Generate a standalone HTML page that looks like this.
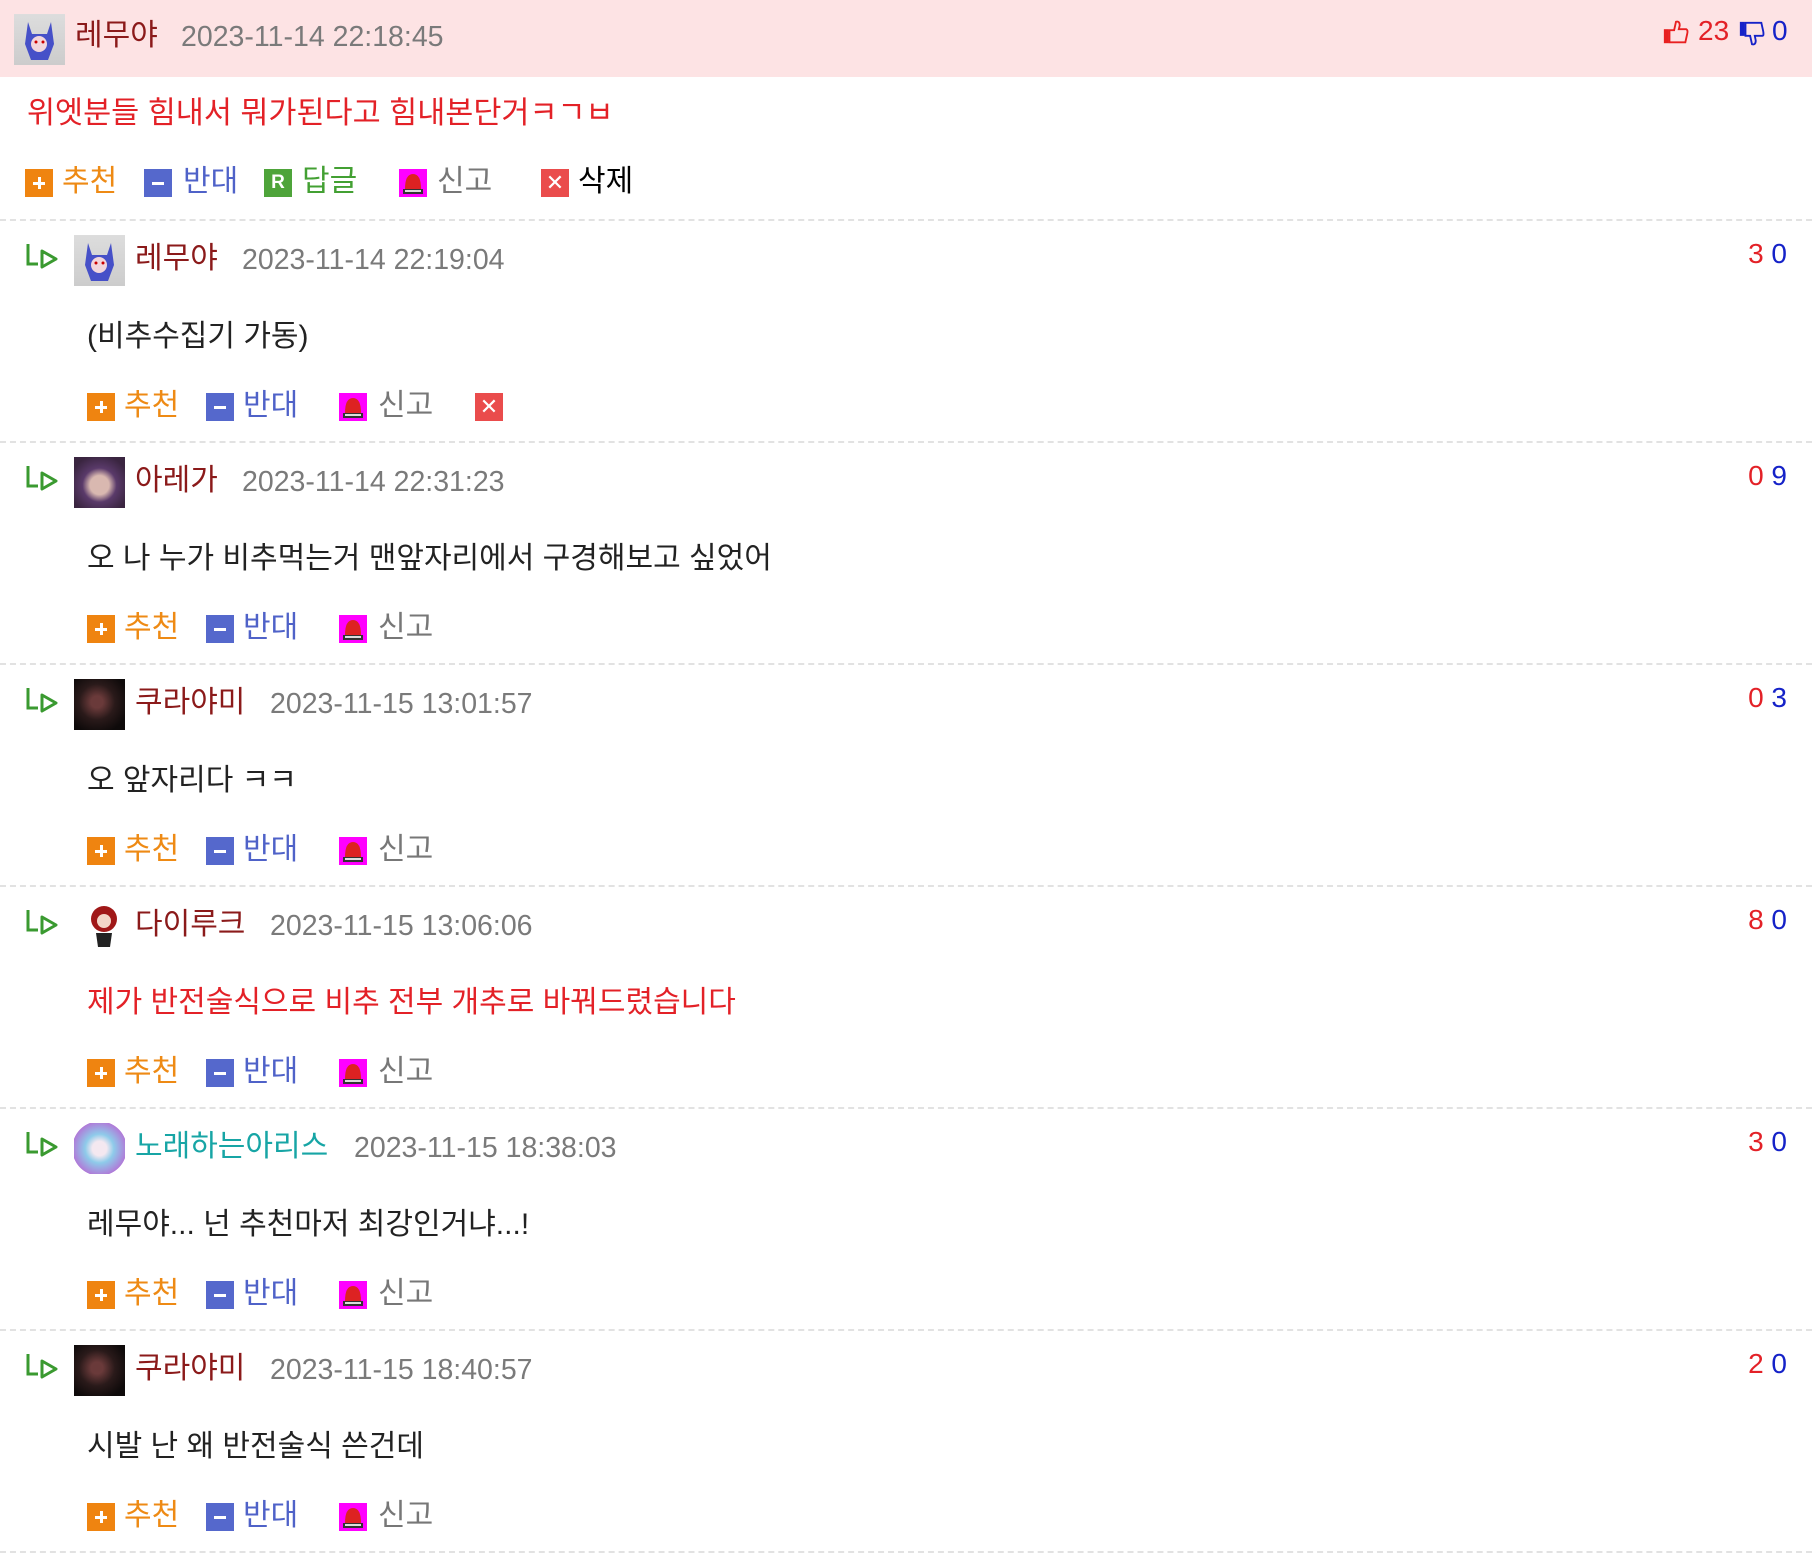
<!DOCTYPE html>
<html><head><meta charset="utf-8"><style>
*{margin:0;padding:0;box-sizing:border-box}
body{width:1812px;height:1551px;background:#fff;position:relative;overflow:hidden;font-family:"Liberation Sans","Noto Sans CJK KR",sans-serif;font-size:28px}
.a{position:absolute;white-space:nowrap;line-height:34px}
.k{font-size:30px}
.hdr{position:absolute;left:0;top:0;width:1812px;height:77px;background:#fde3e4}
.sep{position:absolute;left:0;width:1812px;border-top:2px dashed #e2e2e2;height:0}
.nm{color:#8b1a1a}
.dt{color:#7a7a7a;font-size:28.5px}
.ic{position:absolute;width:28px;height:28px}
.av{position:absolute;width:51px;height:51px}
.o{color:#ee8a14}.b{color:#4f62c8}.g{color:#43a033}.gr{color:#777}
.r{color:#e32127}.bl{color:#1522c8}
</style></head><body>
<div class="hdr"></div>
<div class="av" style="left:14px;top:14px;background:linear-gradient(#ddd,#ccc)"><svg width="51" height="51"><path d="M14 8 L18 20 L33 20 L37 8 L40 30 L34 46 L17 46 L11 30Z" fill="#4650c8"/><circle cx="25" cy="30" r="8" fill="#f2d6dc"/><circle cx="22" cy="28" r="1.5" fill="#c00"/><circle cx="29" cy="28" r="1.5" fill="#c00"/></svg></div>
<div class="a nm k" style="left:75px;top:19px">레무야</div>
<div class="a dt" style="left:181px;top:20px">2023-11-14 22:18:45</div>
<svg class="ic" style="left:1662px;top:18px" width="30" height="30" viewBox="0 0 30 30"><rect x="2" y="12" width="5" height="15" fill="#e82020"/><path d="M8 13 L13 13 L15 4 Q19 3 19 8 L18 12 L26 12 Q28 13 27 17 L25 26 L8 26Z" fill="none" stroke="#e82020" stroke-width="2"/></svg>
<div class="a r" style="left:1698px;top:14px">23</div>
<svg class="ic" style="left:1738px;top:20px" width="30" height="30" viewBox="0 0 30 30"><rect x="2" y="2" width="5" height="15" fill="#1522c8"/><path d="M8 3 L25 3 L27 12 Q28 17 26 17 L18 17 L19 22 Q19 27 15 26 L13 17 L8 17Z" fill="none" stroke="#1522c8" stroke-width="2"/></svg>
<div class="a bl" style="left:1772px;top:14px">0</div>
<div class="a r" style="left:27px;top:96px;font-size:30.5px">위엣분들 힘내서 뭐가된다고 힘내본단거ㅋㄱㅂ</div>
<div class="sep" style="top:219px"></div>

<script>
function btns(x0,y,list){
 let h='';
 const icons={
 p:'<div class="ic" style="background:#ef8410;left:X;top:Y"><div style="position:absolute;left:8px;top:13px;width:12px;height:3px;background:#fff"></div><div style="position:absolute;left:12.5px;top:8px;width:3px;height:12px;background:#fff"></div></div>',
 m:'<div class="ic" style="background:#5568cc;left:X;top:Y"><div style="position:absolute;left:8px;top:13px;width:12px;height:3px;background:#fff"></div></div>',
 r:'<div class="ic" style="background:#4ea43a;left:X;top:Y;color:#fff;font:bold 19px/28px \'Liberation Sans\',sans-serif;text-align:center">R</div>',
 s:'<svg class="ic" style="left:X;top:Y" width="28" height="28"><rect width="28" height="28" fill="#f0f"/><path d="M6 20 Q6 5 14 5 Q22 5 22 20Z" fill="#d22"/><rect x="4" y="20" width="20" height="5" fill="#333"/><rect x="6" y="21" width="16" height="2" fill="#ddd"/></svg>',
 x:'<div class="ic" style="background:#ea4c4c;left:X;top:Y;color:#fff;font:22px/28px \'Liberation Sans\',sans-serif;text-align:center">✕</div>'
 };
 for(const [t,ix,tx,lab,cls] of list){
  h+=icons[t].replace('X',ix+'px').replace('Y',(y-14)+'px');
  if(lab) h+='<div class="a k '+cls+'" style="left:'+tx+'px;top:'+(y-18)+'px">'+lab+'</div>';
 }
 return h;
}
let out='';
out+=btns(0,183,[['p',25,62,'추천','o'],['m',144,183,'반대','b'],['r',264,302,'답글','g'],['s',399,437,'신고','gr'],['x',541,578,'삭제','']]);
const data=[
 ['레무야','nm','2023-11-14 22:19:04','(비추수집기 가동)','#222','3',0,'0','lemu'],
 ['아레가','nm','2023-11-14 22:31:23','오 나 누가 비추먹는거 맨앞자리에서 구경해보고 싶었어','#222','0',0,'9','arega'],
 ['쿠라야미','nm','2023-11-15 13:01:57','오 앞자리다 ㅋㅋ','#222','0',0,'3','dark'],
 ['다이루크','nm','2023-11-15 13:06:06','제가 반전술식으로 비추 전부 개추로 바꿔드렸습니다','#e32127','8',0,'0','dil'],
 ['노래하는아리스','','2023-11-15 18:38:03','레무야... 넌 추천마저 최강인거냐...!','#222','3',0,'0','alice'],
 ['쿠라야미','nm','2023-11-15 18:40:57','시발 난 왜 반전술식 쓴건데','#222','2',0,'0','dark']
];
const av={
 lemu:'<div class="av" style="left:74px;top:Tpx;background:linear-gradient(#ddd,#ccc)"><svg width="51" height="51"><path d="M14 8 L18 20 L33 20 L37 8 L40 30 L34 46 L17 46 L11 30Z" fill="#4650c8"/><circle cx="25" cy="30" r="8" fill="#f2d6dc"/><circle cx="22" cy="28" r="1.5" fill="#c00"/><circle cx="29" cy="28" r="1.5" fill="#c00"/></svg></div>',
 arega:'<div class="av" style="left:74px;top:Tpx;background:radial-gradient(circle at 50% 55%,#d9b8b0 0 25%,#5a3a6a 45%,#3a2540 80%)"></div>',
 dark:'<div class="av" style="left:74px;top:Tpx;background:radial-gradient(circle at 45% 45%,#6a3a3a 0 15%,#2a1a1a 45%,#0e0a0a 80%)"></div>',
 dil:'<svg class="av" style="left:74px;top:Tpx" width="51" height="51"><circle cx="30" cy="18" r="13" fill="#a01818"/><circle cx="30" cy="20" r="7" fill="#f3d6c8"/><path d="M22 32 L38 32 L36 46 L24 46Z" fill="#222"/></svg>',
 alice:'<div class="av" style="left:74px;top:Tpx;background:radial-gradient(circle at 50% 50%,#f4e8f0 0 20%,#8ecbea 40%,#b07ad8 75%,#fff 76%)"></div>'
};
data.forEach((d,k)=>{
 const T=220+222*k;
 out+='<svg style="position:absolute;left:25px;top:'+(T+22)+'px" width="36" height="32"><path d="M3 2 L3 22 L13 22" fill="none" stroke="#3a9a30" stroke-width="3"/><path d="M17 9 L31 17 L17 25Z" fill="none" stroke="#3a9a30" stroke-width="3" stroke-linejoin="round"/></svg>';
 out+=av[d[8]].replace('Tpx',(T+15)+'px');
 const nx=135;
 out+= d[1]?'<div class="a k nm" style="left:'+nx+'px;top:'+(T+22)+'px">'+d[0]+'</div>':'<div class="a k" style="color:#17a5a5;left:'+nx+'px;top:'+(T+22)+'px">'+d[0]+'</div>';
 const dx = d[0].length===3?242:(d[0].length===4?270:354);
 out+='<div class="a dt" style="left:'+dx+'px;top:'+(T+23)+'px">'+d[2]+'</div>';
 out+='<div class="a" style="left:1747px;top:'+(T+17)+'px;width:40px;text-align:right"><span class="r">'+d[5]+'</span> <span class="bl">'+d[7]+'</span></div>';
 out+='<div class="a k" style="left:87px;top:'+(T+100)+'px;color:'+d[4]+'">'+d[3]+'</div>';
 const L=[['p',87,124,'추천','o'],['m',206,243,'반대','b'],['s',339,378,'신고','gr']];
 if(k===0) L.push(['x',475,0,'','']);
 out+=btns(0,T+187,L);
 out+='<div class="sep" style="top:'+(T+221)+'px"></div>';
});
document.write(out);
</script>
</body></html>
